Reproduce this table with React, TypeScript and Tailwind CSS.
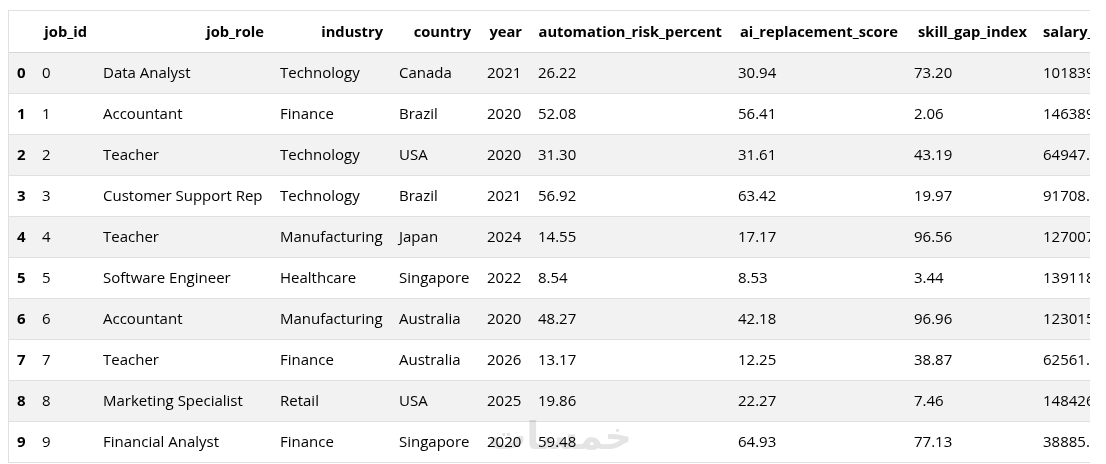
const columns = [
  { key: "job_id", label: "job_id", width: "w-[61px]" },
  { key: "job_role", label: "job_role", width: "w-[177px]" },
  { key: "industry", label: "industry", width: "w-[119px]" },
  { key: "country", label: "country", width: "w-[88px]" },
  { key: "year", label: "year", width: "w-[51px]" },
  { key: "automation", label: "automation_risk_percent", width: "w-[200px]" },
  { key: "ai", label: "ai_replacement_score", width: "w-[176px]" },
  { key: "skill", label: "skill_gap_index", width: "w-[129px]" },
  { key: "salary", label: "salary_before_usd", width: "" },
];

const rows = [
  ["0", "Data Analyst", "Technology", "Canada", "2021", "26.22", "30.94", "73.20", "101839.54"],
  ["1", "Accountant", "Finance", "Brazil", "2020", "52.08", "56.41", "2.06", "146389.12"],
  ["2", "Teacher", "Technology", "USA", "2020", "31.30", "31.61", "43.19", "64947.80"],
  ["3", "Customer Support Rep", "Technology", "Brazil", "2021", "56.92", "63.42", "19.97", "91708.35"],
  ["4", "Teacher", "Manufacturing", "Japan", "2024", "14.55", "17.17", "96.56", "127007.61"],
  ["5", "Software Engineer", "Healthcare", "Singapore", "2022", "8.54", "8.53", "3.44", "139118.27"],
  ["6", "Accountant", "Manufacturing", "Australia", "2020", "48.27", "42.18", "96.96", "123015.44"],
  ["7", "Teacher", "Finance", "Australia", "2026", "13.17", "12.25", "38.87", "62561.09"],
  ["8", "Marketing Specialist", "Retail", "USA", "2025", "19.86", "22.27", "7.46", "148426.73"],
  ["9", "Financial Analyst", "Finance", "Singapore", "2020", "59.48", "64.93", "77.13", "38885.90"],
];

export default function App() {
  return (
    <div className="relative h-[464px] w-[1106px] bg-white pl-[8px] pt-[10px] font-['Open_Sans',sans-serif] text-[15px] text-black">
      <div className="w-[1082px] overflow-hidden border-l border-t border-[#e0e0e0]">
        <table className="w-max border-collapse">
          <thead>
            <tr className="h-[41px] border-b border-[#d6d6d6]">
              <th className="w-[25px]" />
              {columns.map((c) => (
                <th key={c.key} className={`${c.width} whitespace-nowrap px-2 text-right text-[14.7px] font-bold`}>
                  {c.label}
                </th>
              ))}
            </tr>
          </thead>
          <tbody>
            {rows.map((r, i) => (
              <tr
                key={i}
                className={`h-[41px] border-b border-[#e0e0e0] ${i % 2 === 0 ? "bg-[#f2f2f2]" : "bg-white"}`}
              >
                <th className="whitespace-nowrap pl-2 text-left font-bold">{i}</th>
                {r.map((v, j) => (
                  <td key={j} className="whitespace-nowrap px-2 text-left">
                    {v}
                  </td>
                ))}
              </tr>
            ))}
          </tbody>
        </table>
      </div>
      {/* watermark */}
      <div className="pointer-events-none absolute left-[488px] top-[408px] font-['DejaVu_Sans',sans-serif] text-[38px] font-bold text-[#e4e4e4] mix-blend-multiply">
        خمسات
      </div>
    </div>
  );
}
